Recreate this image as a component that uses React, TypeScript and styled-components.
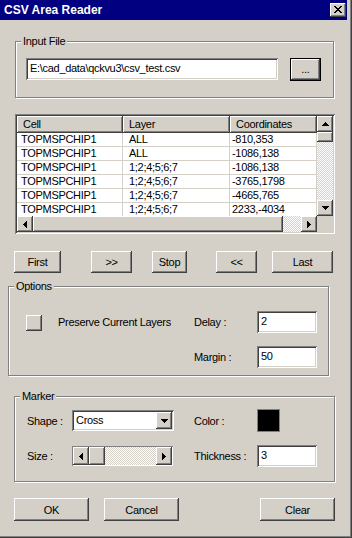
import React from "react";
import styled, { createGlobalStyle, css } from "styled-components";

const GlobalStyle = createGlobalStyle`
  html, body { margin: 0; padding: 0; background: #d4d0c8; }
  body {
    font-family: "Liberation Sans", Arial, sans-serif;
    font-size: 11px;
    letter-spacing: -0.3px;
    color: #000;
  }
  * { box-sizing: border-box; }
`;

// classic 3d edges
const raised = css`
  background: #d4d0c8;
  box-shadow: inset -1px -1px #404040, inset 1px 1px #fff,
    inset -2px -2px #808080, inset 2px 2px #d4d0c8;
`;
const sunken = css`
  box-shadow: inset 1px 1px #808080, inset -1px -1px #fff,
    inset 2px 2px #404040, inset -2px -2px #d4d0c8;
`;
const checker = css`
  background: repeating-conic-gradient(#fff 0 25%, #d4d0c8 0 50%) 0 0 / 2px 2px;
`;

const Window = styled.div`
  width: 352px;
  height: 538px;
  background: #d4d0c8;
  padding: 0 4px 3px 0;
  box-shadow: inset -1px -1px #404040, inset -2px -2px #808080;
  display: flex;
  flex-direction: column;
  overflow: hidden;
`;

const TitleBar = styled.div`
  height: 20px;
  margin-right: 1px;
  background: #000080;
  color: #fff;
  font-weight: bold;
  font-size: 12px;
  letter-spacing: 0;
  display: flex;
  align-items: center;
  justify-content: space-between;
  padding: 0 1px 0 4px;
`;

const CloseBtn = styled.div`
  ${raised};
  width: 16px;
  height: 14px;
  display: flex;
  align-items: center;
  justify-content: center;
  padding-bottom: 1px;
`;

const GroupBox = styled.div<{ $top: number; $left: number; $width: number; $height: number }>`
  position: relative;
  margin: ${(p) => p.$top}px 0 0 ${(p) => p.$left}px;
  width: ${(p) => p.$width}px;
  height: ${(p) => p.$height}px;
  border: 1px solid #808080;
  box-shadow: inset 1px 1px #fff, 1px 1px #fff;
`;

const Legend = styled.span`
  position: absolute;
  top: -7px;
  left: 5px;
  padding: 0 2px;
  line-height: 13px;
  background: #d4d0c8;
`;

const FileRow = styled.div`
  display: flex;
  gap: 12px;
  padding: 16px 0 0 10px;
`;

const TextBox = styled.div<{ $width: number; $height?: number }>`
  ${sunken};
  background: #fff;
  width: ${(p) => p.$width}px;
  height: ${(p) => p.$height ?? 22}px;
  padding: 4px 3px 0 4px;
  line-height: 13px;
  white-space: nowrap;
  overflow: hidden;
`;

const PushButton = styled.div<{ $w: number; $h?: number; $gap?: number }>`
  ${raised};
  width: ${(p) => p.$w}px;
  height: ${(p) => p.$h ?? 22}px;
  margin-left: ${(p) => p.$gap ?? 0}px;
  flex-shrink: 0;
  display: flex;
  align-items: center;
  justify-content: center;
`;

const DefaultButton = styled(PushButton)`
  border: 1px solid #000;
  box-shadow: inset -1px -1px #404040, inset 1px 1px #fff, inset -2px -2px #808080;
  padding-bottom: 2px;
`;

/* list view */
const ListView = styled.div`
  ${sunken};
  background: #fff;
  margin: 16px 0 0 15px;
  width: 320px;
  height: 120px;
  padding: 2px;
  display: grid;
  grid-template-columns: 1fr 16px;
  grid-template-rows: 1fr 16px;
`;

const TableArea = styled.div`
  overflow: hidden;
  background: #fff;
`;

const HeaderRow = styled.div`
  display: grid;
  grid-template-columns: 106px 107px 87px;
  height: 17px;
`;

const HeaderCell = styled.div`
  ${raised};
  padding: 2px 0 0 6px;
  line-height: 13px;
  white-space: nowrap;
  overflow: hidden;
`;

const DataRow = styled.div`
  display: grid;
  grid-template-columns: 106px 107px 87px;
  height: 14px;
`;

const DataCell = styled.div<{ $pad: number }>`
  padding-left: ${(p) => p.$pad}px;
  border-right: 1px solid #d4d0c8;
  border-bottom: 1px solid #d4d0c8;
  line-height: 13px;
  white-space: nowrap;
  overflow: hidden;
`;

const ScrollBar = styled.div<{ $vertical?: boolean }>`
  display: flex;
  flex-direction: ${(p) => (p.$vertical ? "column" : "row")};
  min-width: 0;
  min-height: 0;
`;

const ArrowBtn = styled.div<{ $w?: number; $h?: number }>`
  ${raised};
  width: ${(p) => p.$w ?? 16}px;
  height: ${(p) => p.$h ?? 16}px;
  flex-shrink: 0;
  display: flex;
  align-items: center;
  justify-content: center;
`;

const Thumb = styled.div<{ $w: number; $h: number }>`
  ${raised};
  width: ${(p) => p.$w}px;
  height: ${(p) => p.$h}px;
  flex-shrink: 0;
`;

const Track = styled.div`
  ${checker};
  flex: 1;
`;

const Corner = styled.div`
  background: #d4d0c8;
`;

/* nav buttons */
const ButtonRow = styled.div<{ $top: number; $h: number }>`
  display: flex;
  margin: ${(p) => p.$top}px 0 0 14px;
  height: ${(p) => p.$h}px;
`;

/* options */
const OptionsGrid = styled.div`
  display: grid;
  grid-template-columns: 185px 63px 60px;
  grid-template-rows: 22px 22px;
  row-gap: 13px;
  align-items: center;
  padding-top: 24px;
`;

const CheckCell = styled.div`
  display: flex;
  align-items: center;
  padding-left: 17px;
`;

const PushCheck = styled.div`
  ${raised};
  width: 16px;
  height: 16px;
  margin-right: 16px;
  margin-top: 1px;
`;

/* marker */
const MarkerGrid = styled.div`
  display: grid;
  grid-template-columns: 57px 122px 63px 60px;
  grid-template-rows: 23px 22px;
  row-gap: 13px;
  align-items: center;
  padding-top: 12px;
`;

const Label = styled.div<{ $indent?: number }>`
  padding-left: ${(p) => p.$indent ?? 0}px;
  white-space: nowrap;
`;

const Combo = styled.div`
  ${sunken};
  background: #fff;
  width: 102px;
  height: 21px;
  padding: 2px;
  display: flex;
`;

const ComboText = styled.div`
  flex: 1;
  padding: 2px 0 0 2px;
  line-height: 13px;
`;

const Swatch = styled.div`
  width: 23px;
  height: 23px;
  background: #000;
  border: 1px solid #808080;
`;

const SizeBar = styled.div`
  width: 101px;
  height: 20px;
  padding: 1px;
  box-shadow: inset 1px 1px #808080, inset -1px -1px #fff;
  display: flex;
`;

type Dir = "up" | "down" | "left" | "right";

const Arrow = ({ dir }: { dir: Dir }) => {
  const vertical = dir === "up" || dir === "down";
  const rows = [7, 5, 3, 1];
  const order = dir === "up" || dir === "left" ? [...rows].reverse() : rows;
  return (
    <svg width={vertical ? 7 : 4} height={vertical ? 4 : 7} shapeRendering="crispEdges">
      {order.map((len, i) => {
        const off = (7 - len) / 2;
        return vertical ? (
          <rect key={i} x={off} y={i} width={len} height={1} fill="#000" />
        ) : (
          <rect key={i} x={i} y={off} width={1} height={len} fill="#000" />
        );
      })}
    </svg>
  );
};

const closePattern = [
  "11000011",
  "01100110",
  "00111100",
  "00011000",
  "00111100",
  "01100110",
  "11000011",
];

const CloseGlyph = () => (
  <svg width={8} height={7} shapeRendering="crispEdges">
    {closePattern.flatMap((row, y) =>
      row.split("").map((c, x) =>
        c === "1" ? <rect key={`${x}-${y}`} x={x} y={y} width={1} height={1} fill="#000" /> : null
      )
    )}
  </svg>
);

const rows = [
  ["TOPMSPCHIP1", "ALL", "-810,353"],
  ["TOPMSPCHIP1", "ALL", "-1086,138"],
  ["TOPMSPCHIP1", "1;2;4;5;6;7", "-1086,138"],
  ["TOPMSPCHIP1", "1;2;4;5;6;7", "-3765,1798"],
  ["TOPMSPCHIP1", "1;2;4;5;6;7", "-4665,765"],
  ["TOPMSPCHIP1", "1;2;4;5;6;7", "2233,-4034"],
];

const pads = [4, 6, 2];

export default function App() {
  return (
    <>
      <GlobalStyle />
      <Window>
        <TitleBar>
          <span>CSV Area Reader</span>
          <CloseBtn>
            <CloseGlyph />
          </CloseBtn>
        </TitleBar>

        <GroupBox $top={21} $left={15} $width={319} $height={57}>
          <Legend>Input File</Legend>
          <FileRow>
            <TextBox $width={252}>E:\cad_data\qckvu3\csv_test.csv</TextBox>
            <DefaultButton $w={31} $h={23}>...</DefaultButton>
          </FileRow>
        </GroupBox>

        <ListView>
          <TableArea>
            <HeaderRow>
              <HeaderCell>Cell</HeaderCell>
              <HeaderCell>Layer</HeaderCell>
              <HeaderCell>Coordinates</HeaderCell>
            </HeaderRow>
            {rows.map((r, i) => (
              <DataRow key={i}>
                {r.map((c, j) => (
                  <DataCell key={j} $pad={pads[j]}>
                    {c}
                  </DataCell>
                ))}
              </DataRow>
            ))}
          </TableArea>
          <ScrollBar $vertical>
            <ArrowBtn>
              <Arrow dir="up" />
            </ArrowBtn>
            <Thumb $w={16} $h={10} />
            <Track />
            <ArrowBtn>
              <Arrow dir="down" />
            </ArrowBtn>
          </ScrollBar>
          <ScrollBar>
            <ArrowBtn>
              <Arrow dir="left" />
            </ArrowBtn>
            <Thumb $w={250} $h={16} />
            <Track />
            <ArrowBtn>
              <Arrow dir="right" />
            </ArrowBtn>
          </ScrollBar>
          <Corner />
        </ListView>

        <ButtonRow $top={17} $h={22}>
          <PushButton $w={47}>First</PushButton>
          <PushButton $w={41} $gap={30}>&gt;&gt;</PushButton>
          <PushButton $w={35} $gap={20}>Stop</PushButton>
          <PushButton $w={41} $gap={29}>&lt;&lt;</PushButton>
          <PushButton $w={61} $gap={15}>Last</PushButton>
        </ButtonRow>

        <GroupBox $top={13} $left={8} $width={321} $height={90}>
          <Legend>Options</Legend>
          <OptionsGrid>
            <CheckCell>
              <PushCheck />
              <span>Preserve Current Layers</span>
            </CheckCell>
            <Label>Delay :</Label>
            <TextBox $width={60}>2</TextBox>
            <span />
            <Label>Margin :</Label>
            <TextBox $width={60}>50</TextBox>
          </OptionsGrid>
        </GroupBox>

        <GroupBox $top={20} $left={14} $width={321} $height={86}>
          <Legend>Marker</Legend>
          <MarkerGrid>
            <Label $indent={12}>Shape :</Label>
            <Combo>
              <ComboText>Cross</ComboText>
              <ArrowBtn $w={16} $h={17}>
                <Arrow dir="down" />
              </ArrowBtn>
            </Combo>
            <Label>Color :</Label>
            <Swatch />
            <Label $indent={12}>Size :</Label>
            <SizeBar>
              <ArrowBtn $w={16} $h={18}>
                <Arrow dir="left" />
              </ArrowBtn>
              <Thumb $w={16} $h={18} />
              <Track />
              <ArrowBtn $w={16} $h={18}>
                <Arrow dir="right" />
              </ArrowBtn>
            </SizeBar>
            <Label>Thickness :</Label>
            <TextBox $width={60}>3</TextBox>
          </MarkerGrid>
        </GroupBox>

        <ButtonRow $top={16} $h={23}>
          <PushButton $w={75} $h={23}>OK</PushButton>
          <PushButton $w={75} $h={23} $gap={15}>Cancel</PushButton>
          <PushButton $w={75} $h={23} $gap={81}>Clear</PushButton>
        </ButtonRow>
      </Window>
    </>
  );
}
